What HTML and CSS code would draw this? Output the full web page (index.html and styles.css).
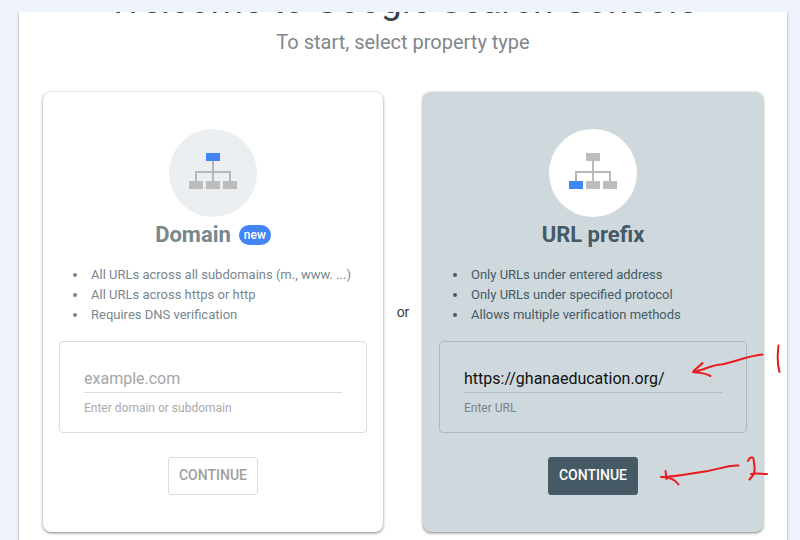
FILE: index.html
```html
<!DOCTYPE html>
<html lang="en">
<head>
<meta charset="utf-8">
<meta name="viewport" content="width=device-width, initial-scale=1">
<title>Welcome to Google Search Console</title>
<link rel="stylesheet" href="styles.css">
</head>
<body>
<main class="dialog">
  <h1 class="title">Welcome to Google Search Console</h1>
  <p class="subtitle">To start, select property type</p>
  <div class="options">
    <form class="card">
      <svg class="emblem" viewBox="0 0 88 88" aria-hidden="true">
        <circle class="disc" cx="44" cy="44" r="44"/>
        <path class="wire" d="M44 30V54M27 54V43H61V54"/>
        <path class="node" d="M20 52h14v8H20zM37 52h14v8H37zM54 52h14v8H54z"/>
        <path class="active" d="M37 24h14v8H37z"/>
      </svg>
      <h2 class="name">Domain <span class="badge">new</span></h2>
      <ul class="facts">
        <li>All URLs across all subdomains (m., www. ...)</li>
        <li>All URLs across https or http</li>
        <li>Requires DNS verification</li>
      </ul>
      <div class="field">
        <input class="entry" id="domain" type="text" placeholder="example.com">
        <label class="hint" for="domain">Enter domain or subdomain</label>
      </div>
      <button class="continue" type="button">CONTINUE</button>
    </form>
    <span class="or">or</span>
    <form class="card selected">
      <svg class="emblem" viewBox="0 0 88 88" aria-hidden="true">
        <circle class="disc" cx="44" cy="44" r="44"/>
        <path class="wire" d="M44 30V54M27 54V43H61V54"/>
        <path class="node" d="M37 24h14v8H37zM37 52h14v8H37zM54 52h14v8H54z"/>
        <path class="active" d="M20 52h14v8H20z"/>
      </svg>
      <h2 class="name">URL prefix</h2>
      <ul class="facts">
        <li>Only URLs under entered address</li>
        <li>Only URLs under specified protocol</li>
        <li>Allows multiple verification methods</li>
      </ul>
      <div class="field">
        <input class="entry" id="url" type="text" value="https://ghanaeducation.org/">
        <label class="hint" for="url">Enter URL</label>
      </div>
      <button class="continue" type="button">CONTINUE</button>
      <svg class="marks" viewBox="640 330 160 170" aria-hidden="true">
        <path d="M762.500 354.500C746 356 733 363 721 364.500C713 364.500 704 370 693 372M702.500 363C700 366 696 368 693 372C699 373 705 373 710.500 376M778.500 345.500C777.500 354 777 364 779.500 372"/>
        <path d="M738.500 465.500C729 465 718 469 708 471C692 473 677 477 661 477M665.500 471L666.500 479M661 477C668 477 675 479 678.500 484.500M748 461C749 457 753 456.500 753.500 459C754 463 755 467 754.500 471C754 474 752 477 749.500 479.500M751 474C756 473 761 474 767 474"/>
      </svg>
    </form>
  </div>
</main>
</body>
</html>
```
FILE: styles.css
```css
* {
  box-sizing: border-box;
}

body {
  margin: 0;
  padding: 12px 13px 0 19px;
  height: 100vh;
  overflow: hidden;
  background: #eff4fc;
  font-family: Roboto, "Liberation Sans", sans-serif;
}

.dialog {
  min-height: 100vh;
  padding: 0 24px 24px;
  overflow: hidden;
  background: #fff;
  box-shadow: 0 1px 3px rgba(0, 0, 0, 0.35);
  clip-path: inset(0 -4px);
}

.title {
  margin: -33px 0 0;
  color: #37424a;
  font-size: 37px;
  font-weight: 400;
  line-height: 44px;
  text-align: center;
  white-space: nowrap;
}

.subtitle {
  margin: 5px 0 36px;
  color: #80878d;
  font-size: 20px;
  line-height: 28px;
  text-align: center;
}

.options {
  display: grid;
  grid-template-columns: minmax(0, 1fr) 40px minmax(0, 1fr);
  align-items: center;
}

.or {
  color: #3c4043;
  font-size: 14px;
  line-height: 20px;
  text-align: center;
}

.card {
  position: relative;
  display: flex;
  flex-direction: column;
  align-items: center;
  padding: 37px 16px;
  border-radius: 8px;
  background: #fff;
  box-shadow: 0 1px 3px rgba(0, 0, 0, 0.5);
  color: #78868e;
}

.card.selected {
  background: #cfd8dd;
  color: #455a64;
}

.emblem {
  width: 88px;
  height: 88px;
}

.disc {
  fill: #eceff1;
}

.selected .disc {
  fill: #fff;
}

.wire {
  fill: none;
  stroke: #b8b8b8;
  stroke-width: 2;
}

.node {
  fill: #bdbdbd;
}

.active {
  fill: #4285f4;
}

.name {
  display: flex;
  align-items: center;
  gap: 8px;
  margin: 4px 0 16px;
  font-size: 22px;
  font-weight: 700;
  line-height: 28px;
}

.badge {
  padding: 0 5px;
  border-radius: 10px;
  background: #4285f4;
  color: #fff;
  font-size: 12px;
  font-weight: 500;
  line-height: 20px;
}

.facts {
  align-self: stretch;
  margin: 0 0 16px;
  padding: 0 0 0 32px;
  font-size: 13px;
  line-height: 20px;
  white-space: nowrap;
}

.facts li {
  position: relative;
  list-style: none;
}

.facts li::before {
  content: "";
  position: absolute;
  top: 8px;
  left: -18px;
  width: 4px;
  height: 4px;
  border-radius: 50%;
  background: currentColor;
}

.field {
  align-self: stretch;
  padding: 24px;
  border: 1px solid #dadce0;
  border-radius: 4px;
}

.selected .field {
  border-color: #adb9c0;
}

.entry {
  display: block;
  width: 100%;
  height: 27px;
  padding: 0 0 2px;
  border: 0;
  border-bottom: 1px solid #dadce0;
  background: transparent;
  color: #111;
  font: 16px Roboto, "Liberation Sans", sans-serif;
  outline: 0;
}

.entry::placeholder {
  color: #a4a6a8;
}

.selected .entry {
  border-color: #b2bcc1;
}

.hint {
  display: block;
  margin-top: 7px;
  margin-bottom: -8px;
  color: #a9abad;
  font-size: 12px;
  line-height: 16px;
}

.selected .hint {
  color: #77848b;
}

.continue {
  width: 90px;
  height: 38px;
  margin-top: 24px;
  padding: 0 0 2px;
  border: 1px solid #dadce0;
  border-radius: 3px;
  background: #fff;
  color: #a09f9b;
  font: 500 14px Roboto, "Liberation Sans", sans-serif;
}

.selected .continue {
  border-color: #455a64;
  background: #455a64;
  color: #fff;
}

.marks {
  position: absolute;
  top: 238px;
  right: -37px;
  width: 160px;
  height: 170px;
  fill: none;
  stroke: #e81c20;
  stroke-width: 2;
  stroke-linecap: round;
  stroke-linejoin: round;
  pointer-events: none;
}
```
